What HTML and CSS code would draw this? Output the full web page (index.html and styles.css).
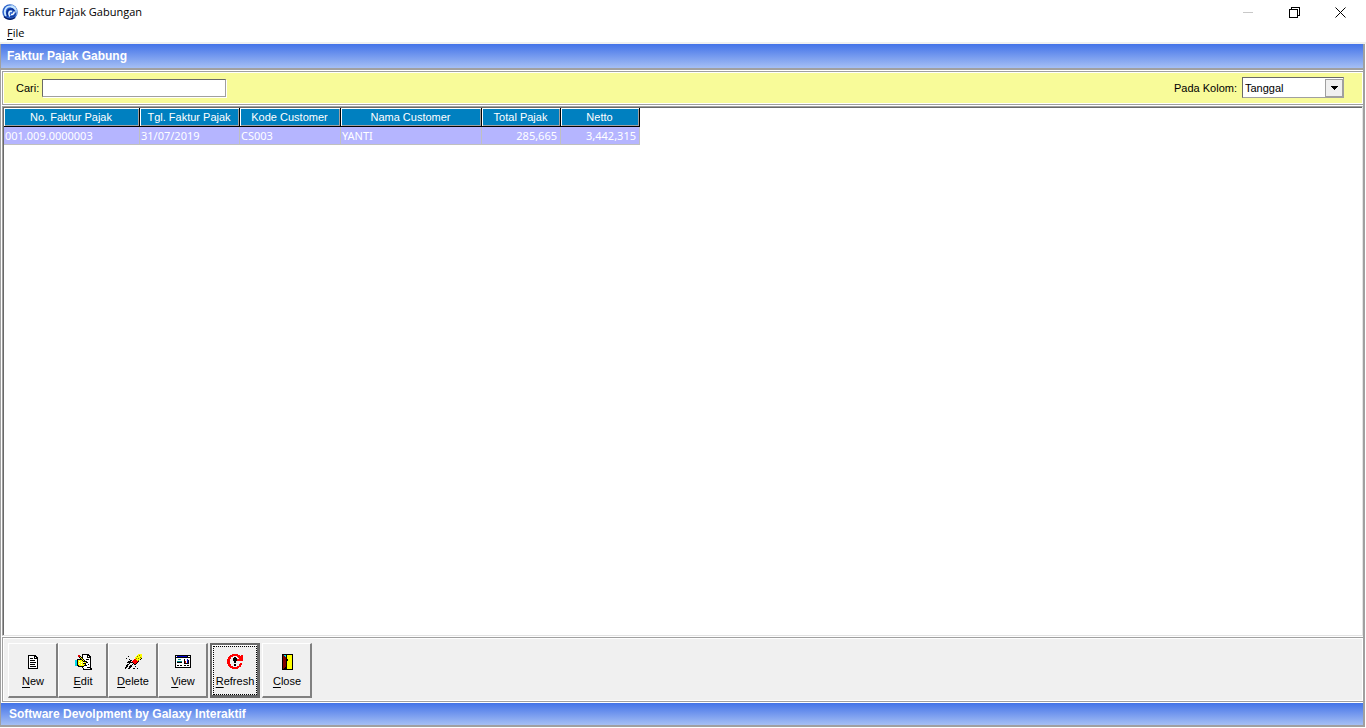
FILE: index.html
```html
<!DOCTYPE html>
<html lang="id">
<head>
<meta charset="utf-8">
<title>Faktur Pajak Gabungan</title>
<link rel="stylesheet" href="styles.css">
</head>
<body>
<div class="window">
  <header class="titlebar">
    <svg class="app-icon" viewBox="0 0 16 16" aria-hidden="true">
      <circle cx="8" cy="8" r="7.7" fill="#2b62cc"/>
      <path d="M8 .5A7.500 7.500 0 0 1 15.500 8L14 12L10 2Z" fill="#9cc4f4"/>
      <path d="M4 12C1 7 4 2 9 2.500C12 3 13 4 13.500 6" fill="none" stroke="#c8e6ff" stroke-width="1.800"/>
      <path d="M6 12.500C3.500 8 6 4.500 10 5C12 5.500 12.500 7 12.500 8.500" fill="none" stroke="#0a2f96" stroke-width="1.500"/>
      <path d="M8 12.500C5.500 9 7.500 6.500 10 7.500" fill="none" stroke="#e8f8ff" stroke-width="1.500"/>
      <path d="M9 10.500C11 11 12.500 9 12 7.500" fill="none" stroke="#fff" stroke-width="1.500"/>
      <path d="M8 12.500C11 13.500 13.500 11.500 14 8.500" fill="none" stroke="#173f9f" stroke-width="1.300"/>
      <path d="M2 12.500C5 16 10 16 13 13.500" fill="none" stroke="#081f68" stroke-width="1.500"/>
    </svg>
    <h1 class="title">Faktur Pajak Gabungan</h1>
    <div class="controls">
      <button class="control" type="button" aria-label="Minimize" disabled><svg viewBox="0 0 11 11"><path d="M0 5.500H10" stroke="#c8c8c8"/></svg></button>
      <button class="control" type="button" aria-label="Restore"><svg viewBox="0 0 11 11"><path d="M.5 2.500H8.500V10.500H.5ZM2.500 2.500V.5H10.500V8.500H8.500" fill="none" stroke="#000"/></svg></button>
      <button class="control" type="button" aria-label="Close window"><svg class="smooth" viewBox="0 0 11 11"><path d="M.5 .5L10.500 10.500M10.500 .5L.5 10.500" stroke="#000"/></svg></button>
    </div>
  </header>
  <nav class="menubar"><button class="menu-item" type="button"><u>F</u>ile</button></nav>
  <main class="client">
    <h2 class="band band-top">Faktur Pajak Gabung</h2>
    <form class="filter">
      <label class="filter-label" for="cari">Cari:</label>
      <input class="search" id="cari" type="text">
      <label class="filter-label push" for="kolom">Pada Kolom:</label>
      <span class="combo">
        <select class="combo-select" id="kolom"><option>Tanggal</option></select>
        <span class="combo-arrow"><svg viewBox="0 0 7 4" aria-hidden="true"><path d="M0 0H7V1H6V2H5V3H4V4H3V3H2V2H1V1H0Z"/></svg></span>
      </span>
    </form>
    <section class="grid">
      <table class="table">
        <colgroup><col class="col-no"><col class="col-date"><col class="col-code"><col class="col-name"><col class="col-sum"><col class="col-sum"></colgroup>
        <thead><tr><th>No. Faktur Pajak</th><th>Tgl. Faktur Pajak</th><th>Kode Customer</th><th>Nama Customer</th><th>Total Pajak</th><th>Netto</th></tr></thead>
        <tbody><tr><td>001.009.0000003</td><td>31/07/2019</td><td>CS003</td><td>YANTI</td><td class="num">285,665</td><td class="num">3,442,315</td></tr></tbody>
      </table>
    </section>
    <div class="toolbar">
      <button class="tool" type="button">
        <svg viewBox="0 0 17 16" aria-hidden="true"><path d="M3 1H11V2H12V3H13V15H3Z"/><path fill="#fff" d="M4 2H9V5H12V14H4ZM10 3H11V4H10Z"/><path d="M5 4H8V5H5ZM5 6H10V7H5ZM5 8H11V9H5ZM5 10H10V11H5ZM5 12H11V13H5Z"/></svg>
        <span><u>N</u>ew</span>
      </button>
      <button class="tool" type="button">
        <svg viewBox="0 0 17 16" aria-hidden="true"><path d="M7 0H14V1H15V2H16V14H17V16H8V14H7Z"/><path fill="#fff" d="M8 1H12V4H15V13H14V14H15V15H9V14H8ZM13 2H14V3H13Z"/><path d="M11 5H14V6H11ZM11 8H13V9H11ZM10 11H12V12H10ZM13 10H14V11H13ZM12 13H14V14H12Z"/><path d="M2 5H8V6H10V7H12V9H11V12H9V13H3V12H1V6H2Z"/><path fill="#ff0" d="M3 6H7V7H9V8H11V9H8V10H10V11H9V12H4V11H3Z"/><path fill="#fff" d="M4 7H5V8H4ZM6 8H7V9H6ZM4 9H5V10H4ZM6 10H7V11H6ZM8 8H9V9H8Z"/><path fill="#00d8e8" d="M0 6H2V12H0Z"/><path d="M3 1H5V2H6V3H7V4H8V5H9V6H10V8H8V7H7V6H6V5H5V4H4V3H3Z"/><path fill="#ff0" d="M5 3H6V4H7V5H8V6H9V7H8V6H7V5H6V4H5Z"/><path fill="#e00000" d="M3 1H5V3H3Z"/></svg>
        <span><u>E</u>dit</span>
      </button>
      <button class="tool" type="button">
        <svg viewBox="0 0 17 16" aria-hidden="true"><path fill="#ff0" d="M13 0H17V4H16V5H15V6H14V7H12V6H11V5H10V3H11V2H12V1H13Z"/><path fill="#777700" d="M12 2H13V3H12ZM14 1H15V2H14ZM13 4H14V5H13ZM15 3H16V4H15ZM11 4H12V5H11ZM13 6H14V7H13Z"/><path fill="#f00" d="M9 5H11V6H12V7H13V8H12V9H11V10H9V9H8V8H7V7H8V6H9Z"/><path d="M13 7H14V8H13V9H12V10H11V11H9V10H8V9H7V8H8V9H9V10H11V9H12V8H13ZM16 4H17V5H16V6H15V5H16ZM3 2H4V3H3ZM1 4H2V5H1ZM4 5H5V6H4ZM5 6H7V7H5ZM3 7H6V8H7V9H5V10H4V9H2V8H3ZM2 10H4V11H3V13H2V14H1V15H0V13H1V11H2ZM5 11H7V13H6V14H5V15H3V14H4V12H5ZM7 10H8V11H7ZM8 14H10V15H8ZM10 12H11V13H10ZM12 14H13V15H12Z"/></svg>
        <span><u>D</u>elete</span>
      </button>
      <button class="tool" type="button">
        <svg viewBox="0 0 17 16" aria-hidden="true"><path d="M0 1H16V14H0Z"/><path fill="#fff" d="M1 4H15V13H1ZM1 2H2V3H1ZM13 2H15V3H13Z"/><path fill="#0000d0" d="M2 2H12V3H2Z"/><path fill="#008b8b" d="M3 5H6V6H3ZM2 7H7V8H2Z"/><path d="M2 8H7V9H2ZM2 11H4V12H2ZM5 11H7V12H5ZM9 11H11V12H9ZM12 11H14V12H12ZM9 5H10V9H14V10H9Z"/><path fill="#e00000" d="M10 7H11V9H10Z"/><path fill="#0000d0" d="M12 5H13V9H12Z"/><path d="M13 6H14V9H13Z"/></svg>
        <span><u>V</u>iew</span>
      </button>
      <button class="tool tool-default" type="button">
        <svg viewBox="0 0 17 16" aria-hidden="true"><path fill="#f00" d="M5 0H11V1H13V2H14V1H16V7H10V5H12V4H11V3H10V2H6V3H4V5H3V10H4V12H6V13H10V12H12V10H13V9H15V11H14V13H12V14H11V15H5V14H3V13H2V12H1V10H0V5H1V3H2V2H3V1H5Z"/><path d="M7 3H9V4H10V7H9V9H7V7H6V4H7ZM7 10H9V12H7Z"/></svg>
        <span><u>R</u>efresh</span>
      </button>
      <button class="tool" type="button">
        <svg viewBox="0 0 17 16" aria-hidden="true"><path d="M3 0H14V16H3Z"/><path fill="#ff0" d="M8 1H13V15H8Z"/><path fill="#800000" d="M4 1H5V2H6V3H7V13H6V14H5V15H4Z"/><path fill="#00e0e8" d="M5 1H7V2H5ZM6 2H7V3H6Z"/><path d="M7 1H8V13H7V14H6V15H5V14H6V13H7ZM8 5H9V7H8Z"/></svg>
        <span><u>C</u>lose</span>
      </button>
    </div>
    <footer class="band band-bottom">Software Devolpment by Galaxy Interaktif</footer>
  </main>
</div>
</body>
</html>
```

FILE: styles.css
```css
* { box-sizing: border-box; }
body { margin: 0; background: #fff; color: #000; font: 11px/14px "Liberation Sans", Arial, sans-serif; }
button, input, select { margin: 0; color: inherit; font: inherit; border-radius: 0; }
svg { display: block; shape-rendering: crispEdges; }
u { text-underline-offset: 2px; text-decoration-skip-ink: none; }

.window { display: flex; flex-direction: column; height: 100vh; padding-bottom: 1px; }
.titlebar { display: flex; align-items: center; height: 24px; padding: 0 3px 0 2px; }
.app-icon { width: 16px; height: 16px; shape-rendering: auto; }
.title { margin: 0 0 0 5px; font: 11px/16px "Open Sans", "Noto Sans", sans-serif; }
.controls { display: flex; height: 21px; margin-left: auto; }
.control { display: flex; align-items: center; justify-content: center; width: 46px; padding: 0; border: 0; background: none; }
.control svg { width: 11px; height: 11px; }
.control .smooth { shape-rendering: auto; }
.menubar { height: 20px; padding: 0 3px; border-bottom: 2px solid #f0f0f0; }
.menu-item { padding: 0 4px; border: 0; background: none; font: 11px/18px "Open Sans", "Noto Sans", sans-serif; }

.client { display: flex; flex: 1; flex-direction: column; min-height: 0; margin-right: 1px; border: solid #a0a0a0; border-width: 0 2px 2px 1px; }
.band { margin: 0; background: linear-gradient(#4373e8, #a5bff4); color: #fff; font-weight: bold; font-size: 12px; line-height: 22px; }
.band-top { padding: 1px 6px; border-bottom: 2px solid #a0a0a0; }
.band-bottom { margin-top: 1px; padding: 0 8px; }

.filter { display: flex; align-items: center; margin: 1px 0 1px 1px; padding: 5px 19px 6px 13px; border: 1px solid #a0a0a0; border-right: 0; background: #f8fb99; box-shadow: inset 0 0 0 1px #fff; }
.filter-label { white-space: nowrap; }
.search { width: 184px; height: 18px; margin-left: 3px; padding: 0 3px; border: 1px solid #a0a0a0; border-top-color: #696969; border-left-color: #696969; background: #fff; box-shadow: 1px 1px #fff; outline: 0; }
.push { margin-left: auto; }
.combo { display: flex; width: 102px; height: 21px; margin-left: 5px; border: 1px solid #a0a0a0; border-top-color: #696969; border-left-color: #696969; background: #fff; }
.combo-select { flex: 1; min-width: 0; padding: 0 2px; border: 0; appearance: none; background: #fff; outline: 0; }
.combo-arrow { display: flex; align-items: center; justify-content: center; width: 18px; margin: 1px 0 0; border: 1px solid #a0a0a0; background: #f0f0f0; }
.combo-arrow svg { width: 7px; height: 4px; }

.grid { flex: 1; min-height: 0; margin-left: 1px; padding: 1px 0 0 1px; overflow: hidden; border: 1px solid #a0a0a0; border-right-color: #e3e3e3; border-bottom-color: #e3e3e3; box-shadow: inset 1px 1px #696969; }
.table { border-spacing: 0; table-layout: fixed; width: 636px; color: #fff; }
.col-no { width: 136px; }
.col-date { width: 100px; }
.col-code { width: 101px; }
.col-name { width: 141px; }
.col-sum { width: 79px; }
th { height: 19px; padding: 0 2px 0 1px; border: solid #000; border-width: 0 1px 1px 0; background: #0080c0; box-shadow: inset 1px 1px #fff, inset -1px -1px #a0a0a0; font-weight: normal; line-height: 18px; white-space: nowrap; }
td { height: 18px; padding: 0 1px; border: solid #c0c0c0; border-width: 0 1px 1px 0; background: #b5b5ff; font: 11px/17px "Noto Sans", sans-serif; white-space: nowrap; }
.num { padding-right: 3px; text-align: right; }

.toolbar { display: flex; margin: 1px 0 0 1px; padding: 5px; padding-bottom: 3px; border: solid #a0a0a0; border-width: 1px 0 1px 1px; background: #f0f0f0; box-shadow: inset 1px 1px #fff, inset -1px -1px #fff; }
.tool { display: flex; flex-direction: column; align-items: center; gap: 4px; width: 50px; height: 55px; padding: 10px 0 0 1px; border: solid; border-width: 1px 2px 2px 1px; border-color: #fff #808080 #808080 #fff; background: #f0f0f0; outline: 0; }
.tool svg { width: 17px; height: 16px; }
.tool-default { margin: 0 2px; padding-top: 9px; border-width: 2px 3px 3px 2px; border-color: #696969; box-shadow: inset 1px 1px #fff; outline: 1px dotted #000; outline-offset: -4px; }
```
